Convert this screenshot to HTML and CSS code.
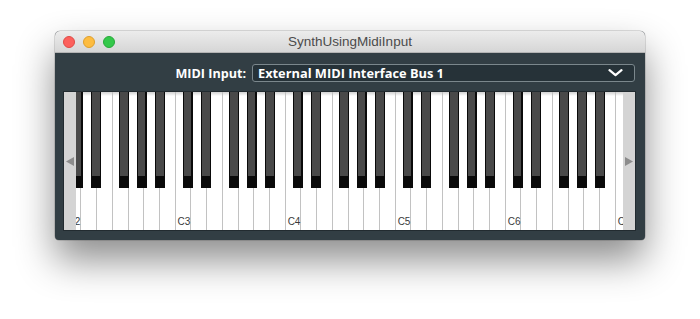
FILE: index.html
```
<!DOCTYPE html>
<html>
<head>
<meta charset="utf-8">
<link rel="stylesheet" href="styles.css">
</head>
<body>
<div class="window">
  <div class="titlebar">
    <div class="lights">
      <span class="light red"></span>
      <span class="light yellow"></span>
      <span class="light green"></span>
    </div>
    <div class="title">SynthUsingMidiInput</div>
  </div>
  <div class="content">
    <div class="input-row">
      <span class="input-label">MIDI Input:</span>
      <div class="combo">
        <span class="combo-text">External MIDI Interface Bus 1</span>
        <svg class="chevron" width="15" height="8" viewBox="0 0 15 8"><polyline points="1.5,1.2 7.5,6.2 13.5,1.2" fill="none" stroke="#fff" stroke-width="2.2" stroke-linecap="round" stroke-linejoin="round"/></svg>
      </div>
    </div>
    <div class="keyboard">
      <div class="keys">
        <div class="octave">
          <div class="wk"><span class="klabel">C2</span></div><div class="wk"></div><div class="wk"></div><div class="wk"></div><div class="wk"></div><div class="wk"></div><div class="wk"></div>
          <div class="bk cs"></div><div class="bk ds"></div><div class="bk fs"></div><div class="bk gs"></div><div class="bk as"></div>
        </div>
        <div class="octave">
          <div class="wk"><span class="klabel">C3</span></div><div class="wk"></div><div class="wk"></div><div class="wk"></div><div class="wk"></div><div class="wk"></div><div class="wk"></div>
          <div class="bk cs"></div><div class="bk ds"></div><div class="bk fs"></div><div class="bk gs"></div><div class="bk as"></div>
        </div>
        <div class="octave">
          <div class="wk"><span class="klabel">C4</span></div><div class="wk"></div><div class="wk"></div><div class="wk"></div><div class="wk"></div><div class="wk"></div><div class="wk"></div>
          <div class="bk cs"></div><div class="bk ds"></div><div class="bk fs"></div><div class="bk gs"></div><div class="bk as"></div>
        </div>
        <div class="octave">
          <div class="wk"><span class="klabel">C5</span></div><div class="wk"></div><div class="wk"></div><div class="wk"></div><div class="wk"></div><div class="wk"></div><div class="wk"></div>
          <div class="bk cs"></div><div class="bk ds"></div><div class="bk fs"></div><div class="bk gs"></div><div class="bk as"></div>
        </div>
        <div class="octave">
          <div class="wk"><span class="klabel">C6</span></div><div class="wk"></div><div class="wk"></div><div class="wk"></div><div class="wk"></div><div class="wk"></div><div class="wk"></div>
          <div class="bk cs"></div><div class="bk ds"></div><div class="bk fs"></div><div class="bk gs"></div><div class="bk as"></div>
        </div>
        <div class="octave">
          <div class="wk"><span class="klabel">C7</span></div><div class="wk"></div><div class="wk"></div><div class="wk"></div><div class="wk"></div><div class="wk"></div><div class="wk"></div>
          <div class="bk cs"></div><div class="bk ds"></div><div class="bk fs"></div><div class="bk gs"></div><div class="bk as"></div>
        </div>
      </div>
      <div class="scroll left"><svg width="8" height="9" viewBox="0 0 8 9"><polygon points="0,4.5 8,0 8,9" fill="#8c8c8c"/></svg></div>
      <div class="scroll right"><svg width="8" height="9" viewBox="0 0 8 9"><polygon points="8,4.5 0,0 0,9" fill="#8c8c8c"/></svg></div>
    </div>
  </div>
</div>
</body>
</html>
```
FILE: styles.css
```
html, body {
  margin: 0;
  padding: 0;
  background: #ffffff;
}
body {
  width: 700px;
  height: 319px;
  overflow: hidden;
  padding-top: 31px;
  box-sizing: border-box;
}
.window {
  margin-left: 55px;
  width: 590px;
  height: 209px;
  border-radius: 5px 5px 4px 4px;
  background: #323e44;
  box-shadow: 0 20px 38px rgba(0, 0, 0, 0.45), 0 0 0 0.5px rgba(0, 0, 0, 0.25);
  display: flex;
  flex-direction: column;
  overflow: hidden;
}
.titlebar {
  height: 22px;
  flex: 0 0 22px;
  box-sizing: border-box;
  background: linear-gradient(#ececec, #d6d6d6);
  border-bottom: 1px solid #b4b4b4;
  display: flex;
  align-items: center;
  position: relative;
}
.lights {
  display: flex;
  gap: 8px;
  padding-left: 8px;
  position: absolute;
  left: 0;
  top: 5px;
}
.light {
  width: 12px;
  height: 12px;
  border-radius: 50%;
  box-sizing: border-box;
}
.red { background: #fc605c; border: 0.5px solid #de4a45; }
.yellow { background: #fdbc40; border: 0.5px solid #de9f2c; }
.green { background: #34c84a; border: 0.5px solid #27a83a; }
.title {
  flex: 1;
  text-align: center;
  font-family: "Liberation Sans", Arial, sans-serif;
  font-size: 13.5px;
  color: #4b4b4b;
  line-height: 22px;
}
.content {
  flex: 1;
  padding: 11px 9px 9px 8px;
  display: flex;
  flex-direction: column;
}
.input-row {
  height: 18px;
  display: flex;
  justify-content: flex-end;
  align-items: center;
  gap: 6px;
  padding-right: 1px;
}
.input-label {
  font-family: "Open Sans", "Noto Sans", sans-serif;
  font-weight: bold;
  font-size: 12.6px;
  color: #ffffff;
}
.combo {
  width: 383px;
  height: 18px;
  box-sizing: border-box;
  border: 1px solid #7b878c;
  border-radius: 3px;
  background: #263238;
  display: flex;
  align-items: center;
  padding: 0 11px 0 5px;
}
.combo-text {
  flex: 1;
  font-family: "Open Sans", "Noto Sans", sans-serif;
  font-weight: bold;
  font-size: 12.8px;
  color: #ffffff;
  white-space: nowrap;
}
.chevron {
  display: block;
}
.keyboard {
  margin-top: 9px;
  width: 573px;
  height: 140px;
  box-sizing: border-box;
  border: 1px solid #222b30;
  position: relative;
  overflow: hidden;
  background: #ffffff;
}
.keys {
  display: flex;
  height: 138px;
  margin-left: 1.6px;
}
.octave {
  flex: 0 0 110px;
  display: flex;
  position: relative;
  height: 138px;
}
.wk {
  flex: 0 0 15.714px;
  box-sizing: border-box;
  border-right: 1px solid #c2c2c2;
  background: linear-gradient(rgba(0, 0, 0, 0.18), rgba(0, 0, 0, 0) 4px), #ffffff;
  display: flex;
  align-items: flex-end;
  padding: 0 0 3px 2px;
}
.klabel {
  font-family: "Liberation Sans", Arial, sans-serif;
  font-size: 10px;
  line-height: 10px;
  color: #3a3a3a;
}
.bk {
  position: absolute;
  top: 0;
  width: 10px;
  height: 96px;
  background: #0a0a0a;
}
.bk::after {
  content: "";
  position: absolute;
  top: 0;
  left: 1.25px;
  right: 1.25px;
  height: 84px;
  background: #494949;
}
.cs { left: 7px; }
.ds { left: 25.2px; }
.fs { left: 53.3px; }
.gs { left: 71.1px; }
.as { left: 89.3px; }
.scroll {
  position: absolute;
  top: 0;
  width: 12px;
  height: 138px;
  background: #d4d4d4;
  display: flex;
  align-items: center;
  justify-content: center;
}
.scroll svg { display: block; }
.scroll.left { left: 0; }
.scroll.right { right: 0; }
```
